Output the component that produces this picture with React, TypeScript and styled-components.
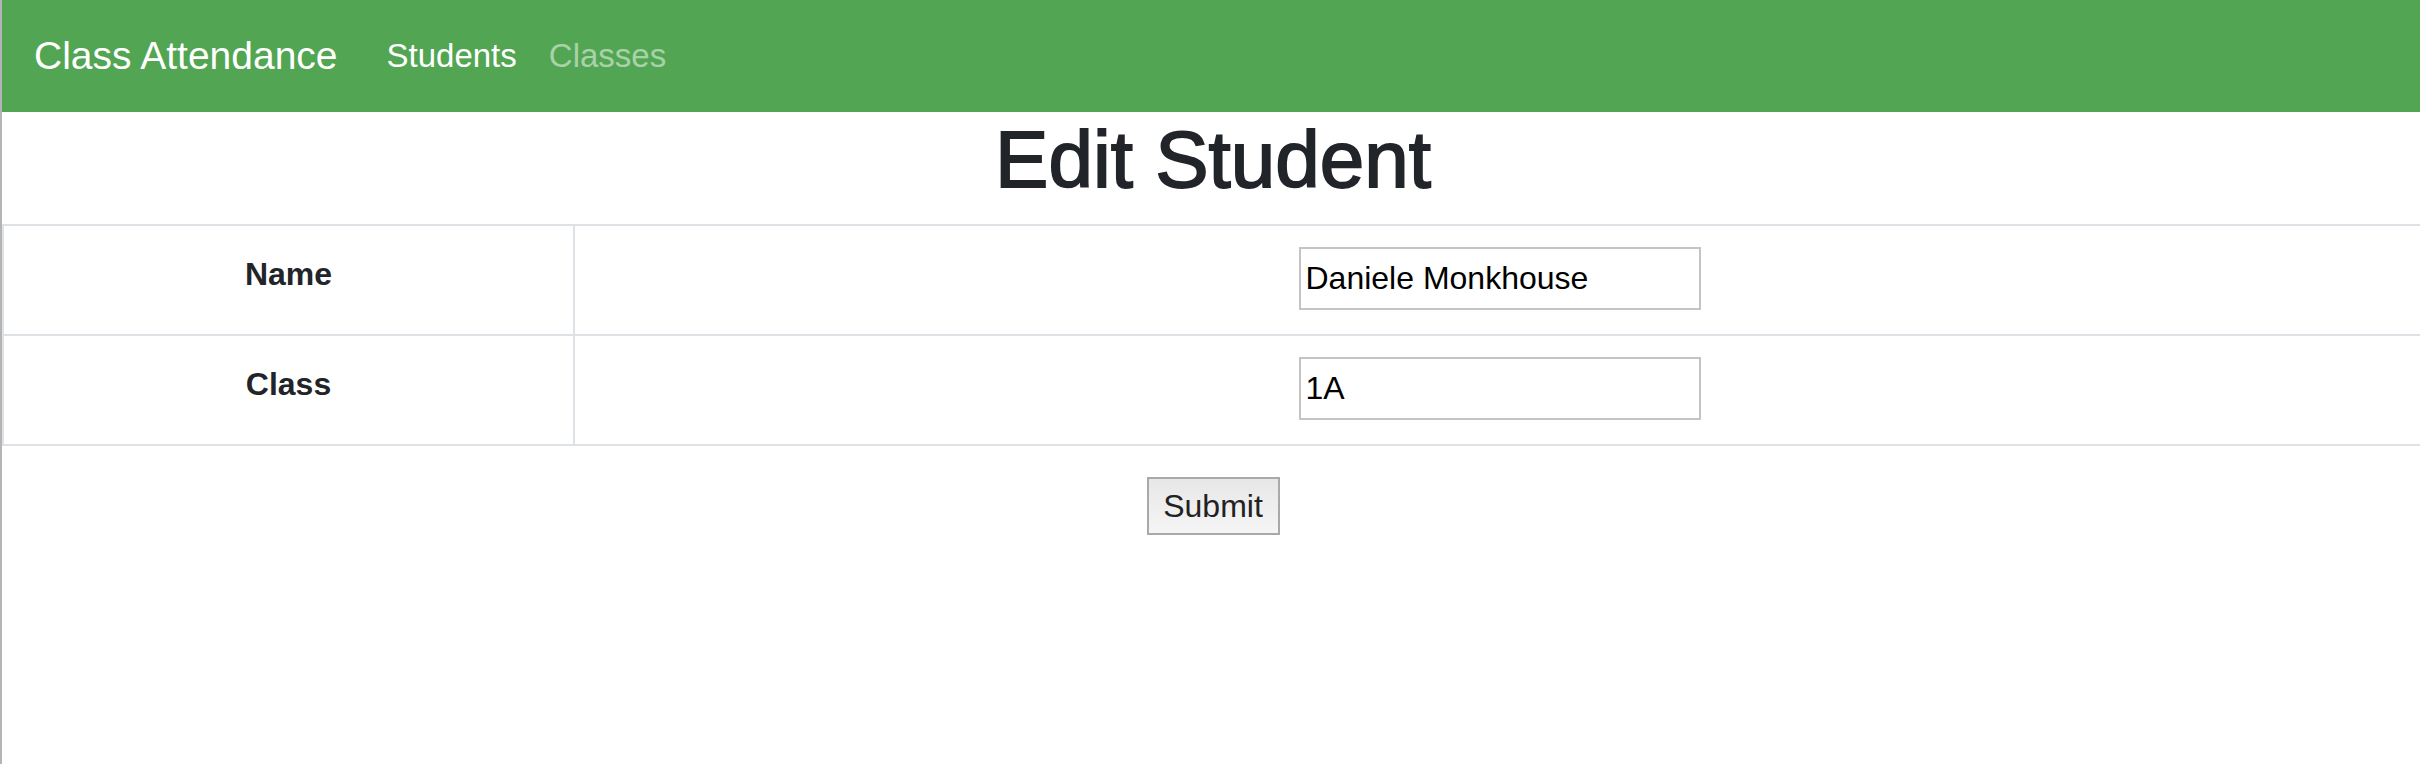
import React from "react";
import styled, { createGlobalStyle } from "styled-components";

const GlobalStyle = createGlobalStyle`
  html, body {
    margin: 0;
    padding: 0;
    background: #ffffff;
    overflow: hidden;
  }
  body {
    font-family: "Liberation Sans", Arial, Helvetica, sans-serif;
    font-size: 32px;
    line-height: 1.5;
    color: #212529;
  }
  * { box-sizing: border-box; }
`;

const Frame = styled.div`
  display: flex;
  width: 2424px;
  min-height: 764px;
`;

const WindowEdge = styled.div`
  flex: 0 0 2px;
  background: #b4b4b4;
`;

const Page = styled.div`
  flex: 1;
  display: flex;
  flex-direction: column;
`;

const Navbar = styled.nav`
  display: flex;
  align-items: center;
  height: 112px;
  padding: 16px 32px;
  background: #52a552;
`;

const Brand = styled.a`
  font-size: 39px;
  line-height: 60px;
  color: #ffffff;
  text-decoration: none;
  margin-right: 33px;
  white-space: nowrap;
`;

const NavLink = styled.a<{ $active?: boolean }>`
  font-size: 33px;
  line-height: 48px;
  padding: 0 16px;
  color: ${(p) => (p.$active ? "#ffffff" : "rgba(255, 255, 255, 0.5)")};
  text-decoration: none;
`;

const Title = styled.h1`
  margin: 0 0 16px;
  font-size: 80px;
  line-height: 96px;
  font-weight: 500;
  text-align: center;
  color: #212529;
  -webkit-text-stroke: 1.8px #212529;
`;

const Table = styled.table`
  width: 100%;
  border-collapse: collapse;
  border-left: 2px solid #dee2e6;
`;

const Row = styled.tr`
  border-top: 2px solid #dee2e6;
  border-bottom: 2px solid #dee2e6;
`;

const Label = styled.th`
  width: 571px;
  padding: 24px 24px 0;
  vertical-align: top;
  text-align: center;
  font-weight: 700;
  font-size: 32px;
  line-height: 48px;
  border-right: 2px solid #dee2e6;
`;

const Cell = styled.td`
  padding: 21px 24px 24px;
  vertical-align: top;
  text-align: center;
`;

const Input = styled.input`
  display: block;
  margin: 0 auto;
  width: 402px;
  height: 63px;
  padding: 0 5px;
  border: 2px solid #c4c4c4;
  font-family: "Liberation Sans", Arial, Helvetica, sans-serif;
  font-size: 32px;
  color: #000000;
  background: #ffffff;
  outline: none;
`;

const Actions = styled.div`
  display: flex;
  justify-content: center;
  padding-top: 31px;
`;

const SubmitButton = styled.button`
  width: 133px;
  height: 58px;
  padding: 0;
  border: 2px solid #a9a9a9;
  border-radius: 0;
  background: linear-gradient(#e7e7e7, #f5f5f5);
  font-family: "Liberation Sans", Arial, Helvetica, sans-serif;
  font-size: 32px;
  line-height: 1;
  color: #222222;
`;

export default function App() {
  return (
    <>
      <GlobalStyle />
      <Frame>
        <WindowEdge />
        <Page>
          <Navbar>
            <Brand href="#">Class Attendance</Brand>
            <NavLink $active href="#">
              Students
            </NavLink>
            <NavLink href="#">Classes</NavLink>
          </Navbar>
          <Title>Edit Student</Title>
          <Table>
            <tbody>
              <Row>
                <Label>Name</Label>
                <Cell>
                  <Input defaultValue="Daniele Monkhouse" />
                </Cell>
              </Row>
              <Row>
                <Label>Class</Label>
                <Cell>
                  <Input defaultValue="1A" />
                </Cell>
              </Row>
            </tbody>
          </Table>
          <Actions>
            <SubmitButton type="button">Submit</SubmitButton>
          </Actions>
        </Page>
      </Frame>
    </>
  );
}
